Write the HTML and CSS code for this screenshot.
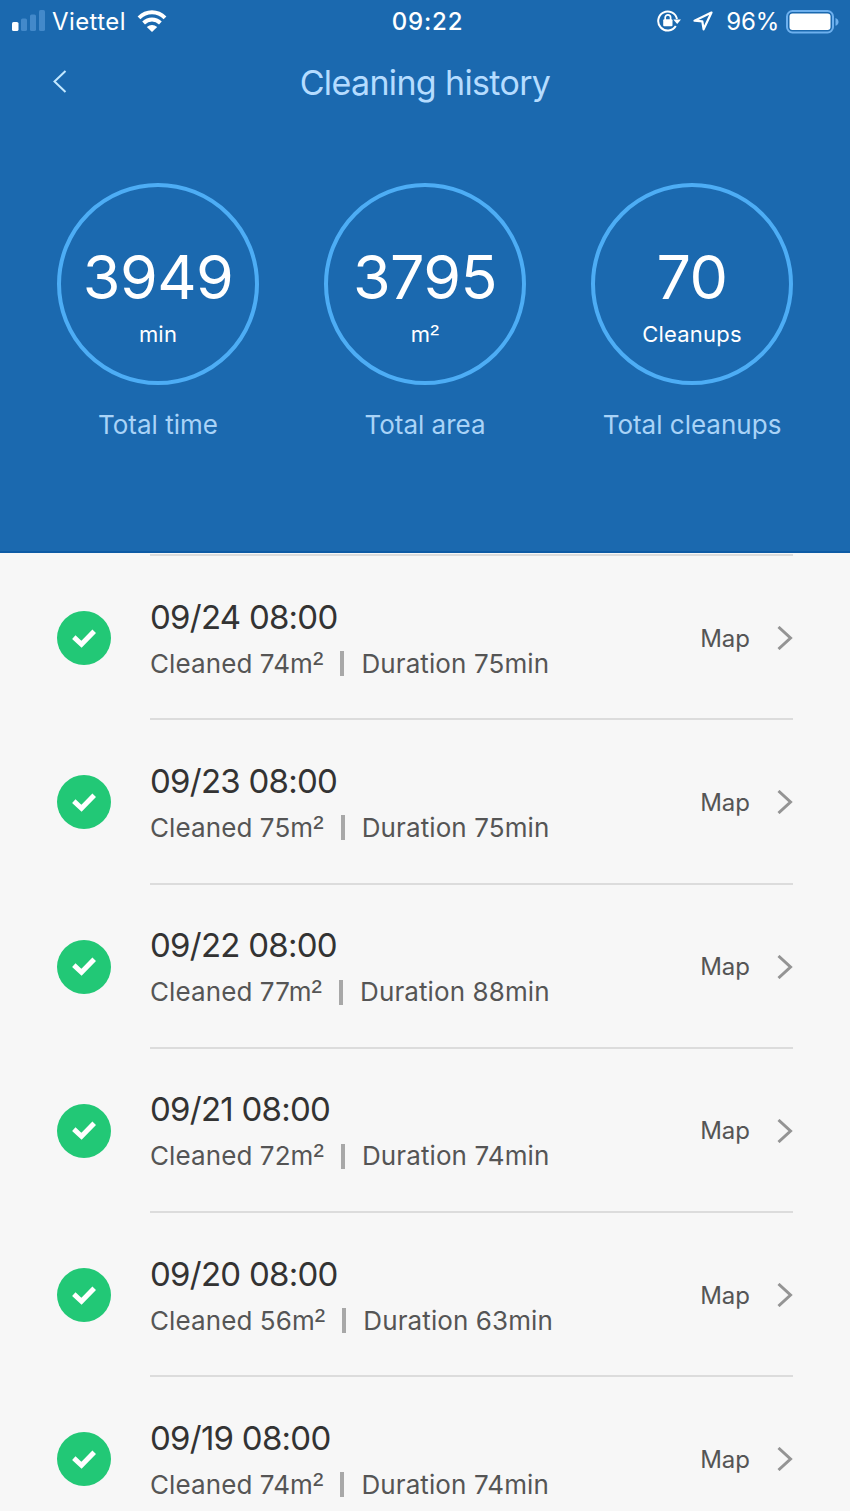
FILE: index.html
```
<!DOCTYPE html>
<html lang="en">
<head>
  <meta charset="UTF-8">
  <meta name="viewport" content="width=device-width, initial-scale=1.0">
  <title>Cleaning history</title>
  <link rel="stylesheet" href="styles.css">
</head>
<body>

<header>
  <div class="status-bar">
    <div class="status-left">
      <svg class="signal" width="33" height="21" viewBox="0 0 33 21">
        <rect x="0" y="12" width="6.5" height="9" rx="1.6" fill="#fff"/>
        <rect x="9" y="8.500" width="6" height="12.500" rx="1.6" fill="#4389ca"/>
        <rect x="18" y="4.500" width="6" height="16.500" rx="1.6" fill="#4389ca"/>
        <rect x="27" y="0" width="6" height="21" rx="1.6" fill="#4389ca"/>
      </svg>
      <span class="carrier">Viettel</span>
      <svg class="wifi" width="30" height="22" viewBox="0 0 30 22" fill="none" stroke="#fff" stroke-width="4">
        <path d="M2 7.800C9.500 .4 20.500 .4 28 7.800"/>
        <path d="M6.600 13C11.500 8.400 18.500 8.400 23.400 13"/>
        <path d="M15 22L9.800 17C13 14.200 17 14.200 20.200 17Z" fill="#fff" stroke="none"/>
      </svg>
    </div>
    <span class="clock">09:22</span>
    <div class="status-right">
      <svg class="lock" width="24" height="22" viewBox="0 0 24 22" fill="none" stroke="#fff" stroke-width="2">
        <path d="M18.800 16A9.500 9.500 0 1 1 20 9"/>
        <path d="M16.300 9.500H24L20.200 14Z" fill="#fff" stroke="none"/>
        <rect x="6.200" y="9.300" width="9.300" height="7" rx="1" fill="#fff" stroke="none"/>
        <path d="M8.200 10V7.500a2.700 2.700 0 0 1 5.400 0V10" stroke-width="1.700"/>
      </svg>
      <svg class="location" width="20" height="20" viewBox="0 0 20 20" fill="none" stroke="#fff" stroke-width="2.200" stroke-linejoin="round">
        <path d="M18.500 1.500L1.500 9.700L9.300 10.300L10.600 18.300Z"/>
      </svg>
      <span class="percent">96%</span>
      <svg class="battery" width="53" height="24" viewBox="0 0 53 24">
        <rect x="1" y="1" width="46" height="21.500" rx="5.500" fill="none" stroke="#6db0ee" stroke-width="2"/>
        <rect x="3.500" y="3.500" width="41" height="16.500" rx="3" fill="#fff"/>
        <path d="M49.500 8C53.500 9.300 53.500 14.500 49.500 15.800Z" fill="#6db0ee"/>
      </svg>
    </div>
  </div>

  <div class="title-bar">
    <svg class="back" width="14" height="24" viewBox="0 0 14 24" fill="none" stroke="#c3e8ff" stroke-width="2">
      <path d="M12.500 1L1.500 11.500L12.500 22"/>
    </svg>
    <h1>Cleaning history</h1>
  </div>

  <div class="totals">
    <div class="total">
      <div class="ring">
        <span class="number">3949</span>
        <span class="unit">min</span>
      </div>
      <span class="label">Total time</span>
    </div>
    <div class="total">
      <div class="ring">
        <span class="number">3795</span>
        <span class="unit">m<span class="square">²</span></span>
      </div>
      <span class="label">Total area</span>
    </div>
    <div class="total">
      <div class="ring">
        <span class="number">70</span>
        <span class="unit">Cleanups</span>
      </div>
      <span class="label">Total cleanups</span>
    </div>
  </div>
</header>

<div class="history" id="history">
  <!-- rows are added below -->
</div>

<script>
  const cleanups = [
    { date: "09/24 08:00", area: 74, duration: 75 },
    { date: "09/23 08:00", area: 75, duration: 75 },
    { date: "09/22 08:00", area: 77, duration: 88 },
    { date: "09/21 08:00", area: 72, duration: 74 },
    { date: "09/20 08:00", area: 56, duration: 63 },
    { date: "09/19 08:00", area: 74, duration: 74 }
  ];

  const list = document.getElementById("history");

  cleanups.forEach((item) => {
    const div = document.createElement("div");
    div.className = "row";
    div.innerHTML = `
      <div class="check">
        <svg width="24" height="19" viewBox="0 0 24 19" fill="none" stroke="#fff" stroke-width="5">
          <path d="M1.800 8.200L9.500 15.300L22.200 2.200"/>
        </svg>
      </div>
      <div class="entry">
        <div class="info">
          <div class="date">${item.date}</div>
          <div class="detail">
            <span>Cleaned ${item.area}m<span class="square">²</span></span>
            <span class="bar"></span>
            <span>Duration ${item.duration}min</span>
          </div>
        </div>
        <span class="map">Map</span>
        <svg class="arrow" width="16" height="24" viewBox="0 0 16 24" fill="none" stroke="#949494" stroke-width="3">
          <path d="M1.500 1L13.500 12L1.500 23"/>
        </svg>
      </div>
    `;
    list.appendChild(div);
  });
</script>

</body>
</html>
```
FILE: styles.css
```
body {
  font-family: Inter, "Liberation Sans", sans-serif;
  background-color: #f7f7f7;
  margin: 0;
  height: 1511px;
  overflow: hidden;
}

header {
  background-color: #1b69af;
  height: 553px;
  box-sizing: border-box;
  border-bottom: 2px solid #0d5ba5;
}

.status-bar {
  display: grid;
  grid-template-columns: 1fr auto 1fr;
  align-items: center;
  height: 43px;
  padding: 0 11px 0 12px;
  color: white;
  font-size: 24px;
}

.status-left, .status-right {
  display: flex;
  align-items: center;
}

.signal, .wifi {
  position: relative;
  top: -1px;
}

.status-right {
  justify-content: flex-end;
}

.carrier {
  margin: 0 11px 0 7px;
  letter-spacing: 0.4px;
}

.clock {
  padding-left: 4px;
  font-weight: 500;
  letter-spacing: 0.8px;
}

.lock, .location {
  position: relative;
  top: -1px;
}

.location {
  margin: 0 13px 0 12px;
}

.battery {
  margin-left: 7px;
}

.percent {
  letter-spacing: -0.2px;
}

.title-bar {
  display: grid;
  grid-template-columns: 1fr auto 1fr;
  align-items: center;
  height: 80px;
  padding: 0 53px 2px;
  box-sizing: border-box;
}

h1 {
  margin: 0;
  font-size: 34px;
  font-weight: 400;
  letter-spacing: -0.65px;
  color: #b5dcff;
}

.totals {
  display: flex;
  justify-content: space-between;
  padding: 60px 57px 0;
}

.total {
  width: 202px;
  display: flex;
  flex-direction: column;
  align-items: center;
}

.ring {
  width: 202px;
  height: 202px;
  box-sizing: border-box;
  border: 4px solid #4dadf5;
  border-radius: 50%;
  display: flex;
  flex-direction: column;
  align-items: center;
  color: white;
}

.number {
  margin-top: 55px;
  font-size: 61px;
  letter-spacing: -0.6px;
  line-height: 70px;
}

.unit {
  margin-top: 8px;
  font-size: 22px;
  line-height: 28px;
  letter-spacing: 0.2px;
}

.label {
  margin-top: 24px;
  font-size: 26px;
  line-height: 32px;
  color: #a9d3f7;
  white-space: nowrap;
}

/* taller superscript than the one in Inter */
.square {
  font-family: "Liberation Sans", sans-serif;
  font-size: 1.2em;
  line-height: 1;
}

.history {
  padding: 1px 57px 0;
}

.row {
  display: flex;
  align-items: center;
  height: 164.25px;
}

.check {
  width: 54px;
  height: 54px;
  margin-top: 4px;
  border-radius: 50%;
  background-color: #22c876;
  display: flex;
  align-items: center;
  justify-content: center;
}

.entry {
  flex: 1;
  height: 100%;
  box-sizing: border-box;
  border-top: 2px solid #dcdcdc;
  padding-top: 2px;
  margin-left: 39px;
  display: flex;
  align-items: center;
}

.info {
  flex: 1;
}

.date {
  font-size: 33px;
  line-height: 44px;
  letter-spacing: -0.75px;
  color: #333;
}

.detail {
  display: flex;
  align-items: center;
  margin-top: 7px;
  font-size: 26px;
  line-height: 36px;
  letter-spacing: 0.1px;
  color: #555;
}

.bar {
  width: 4px;
  height: 25px;
  margin: 0 17px;
  background-color: #a8a8a8;
}

.map {
  margin-right: 27px;
  font-size: 24px;
  color: #555;
}
```
